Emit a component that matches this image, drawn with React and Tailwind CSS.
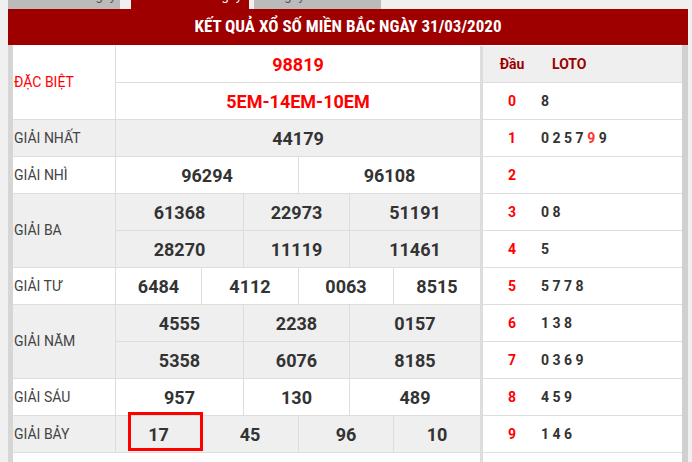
import React from "react";

const W = {
  1: ["flex-1"],
  2: ["w-[183px]", "flex-1"],
  3: ["w-[128px]", "w-[106px]", "flex-1"],
  4: ["w-[86px]", "w-[97px]", "w-[95px]", "flex-1"],
};

const groups = [
  {
    label: "ĐẶC BIỆT",
    red: true,
    bg: "bg-white",
    rows: [["98819"], ["5EM-14EM-10EM"]],
  },
  { label: "GIẢI NHẤT", bg: "bg-[#efefef]", rows: [["44179"]] },
  { label: "GIẢI NHÌ", bg: "bg-white", rows: [["96294", "96108"]] },
  {
    label: "GIẢI BA",
    bg: "bg-[#efefef]",
    rows: [
      ["61368", "22973", "51191"],
      ["28270", "11119", "11461"],
    ],
  },
  { label: "GIẢI TƯ", bg: "bg-white", rows: [["6484", "4112", "0063", "8515"]] },
  {
    label: "GIẢI NĂM",
    bg: "bg-[#efefef]",
    rows: [
      ["4555", "2238", "0157"],
      ["5358", "6076", "8185"],
    ],
  },
  { label: "GIẢI SÁU", bg: "bg-white", rows: [["957", "130", "489"]] },
  { label: "GIẢI BẢY", bg: "bg-[#efefef]", rows: [["17", "45", "96", "10"]] },
];

const loto = [
  ["0", ["8"]],
  ["1", ["0", "2", "5", "7", "9r", "9"]],
  ["2", []],
  ["3", ["0", "8"]],
  ["4", ["5"]],
  ["5", ["5", "7", "7", "8"]],
  ["6", ["1", "3", "8"]],
  ["7", ["0", "3", "6", "9"]],
  ["8", ["4", "5", "9"]],
  ["9", ["1", "4", "6"]],
];

function Group({ g }) {
  return (
    <div className={`flex ${g.bg}`}>
      <div
        className={`w-[103px] shrink-0 border-r border-b border-[#dddddd] flex items-center pl-[1px] text-[14px] ${
          g.red ? "text-[#ff0000]" : "text-[#444444]"
        }`}
      >
        {g.label}
      </div>
      <div className="flex flex-col w-[364px]">
        {g.rows.map((r, i) => (
          <div key={i} className="flex h-[37px] border-b border-[#dddddd]">
            {r.map((v, j) => (
              <div
                key={j}
                className={`${W[r.length][j]} flex items-center justify-center text-[18px] font-bold ${
                  j < r.length - 1 ? "border-r border-[#dddddd]" : ""
                } ${g.red ? "text-[#ff0000]" : "text-[#333333]"}`}
              >
                {v}
              </div>
            ))}
          </div>
        ))}
      </div>
    </div>
  );
}

export default function App() {
  return (
    <div className="w-[692px] h-[462px] bg-[#f0f0f0] overflow-hidden font-['Roboto',sans-serif]">
      <div className="ml-[8px] w-[680px]">
        <div className="flex h-[9px] overflow-hidden">
          <div className="w-[112px] bg-[#bbbbbb] flex justify-center">
            <div className="-mt-[14px] text-[13px] leading-[20px] text-[#555555] whitespace-nowrap pl-[20px]">
              XSMB 30 ngày
            </div>
          </div>
          <div className="ml-[11px] w-[118px] bg-[#9e0000] flex justify-center">
            <div className="-mt-[14px] text-[13px] leading-[20px] text-white whitespace-nowrap pl-[20px]">
              XSMB 60 ngày
            </div>
          </div>
          <div className="ml-[5px] w-[127px] bg-[#bbbbbb] flex justify-start">
            <div className="-mt-[14px] text-[13px] leading-[20px] text-[#555555] whitespace-nowrap pl-[4px]">
              XS ngày
            </div>
          </div>
        </div>
        <div className="h-[36px] bg-[#9e0000] flex items-center justify-center">
          <span className="text-white font-bold text-[17px] font-['Roboto_Condensed','Liberation_Sans_Narrow','DejaVu_Sans_Condensed',sans-serif]">
            KẾT QUẢ XỔ SỐ MIỀN BẮC NGÀY 31/03/2020
          </span>
        </div>
        <div className="flex h-[417px] bg-white border-l-[5px] border-l-[#d6d6d6] border-r-[6px] border-r-[#d0d0d0] pt-[1px]">
          <div className="relative w-[467px] shrink-0">
            {groups.map((g, i) => (
              <Group key={i} g={g} />
            ))}
            <div className="absolute left-[115px] top-[366px] w-[75px] h-[39px] border-[3px] border-[#ff0000]" />
          </div>
          <div className="flex-1 border-l-[3px] border-l-[#dddddd]">
            <div className="flex h-[37px] items-center bg-[#efefef] border-b border-[#dddddd] text-[14px] font-bold text-[#9b0000]">
              <div className="w-[58px] text-center">Đầu</div>
              <div className="pl-[11px]">LOTO</div>
            </div>
            {loto.map(([d, nums]) => (
              <div
                key={d}
                className="flex h-[37px] items-center border-b border-[#dddddd] text-[14px] font-bold"
              >
                <div className="w-[58px] text-center text-[#ff0000]">{d}</div>
                <div className="text-[#333333] whitespace-pre">
                  {nums.map((n, k) => (
                    <span key={k} className={n.endsWith("r") ? "text-[#ff3333]" : ""}>
                      {n.replace("r", "")}
                      {k < nums.length - 1 ? " " : ""}
                    </span>
                  ))}
                </div>
              </div>
            ))}
          </div>
        </div>
      </div>
    </div>
  );
}
